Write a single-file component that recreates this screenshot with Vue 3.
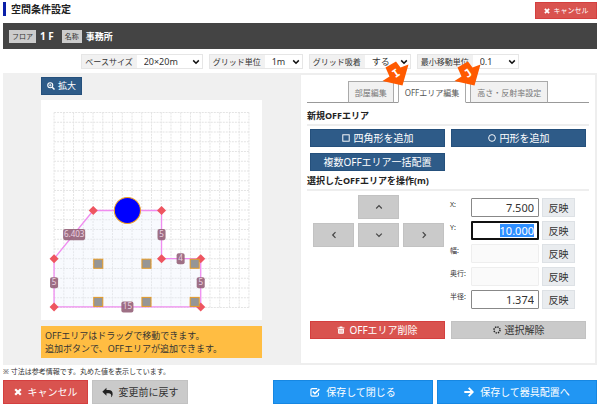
<script setup>
import { onMounted, ref } from 'vue'

const filters = [
  { id: 'base', label: 'ベースサイズ', options: ['20×20m', '30×30m'], size: 'wide' },
  { id: 'grid', label: 'グリッド単位', options: ['1m', '2m'], size: 'narrow' },
  { id: 'snap', label: 'グリッド吸着', options: ['する', 'しない'], size: 'mid' },
  { id: 'step', label: '最小移動単位', options: ['0.1', '0.5'], size: 'mid' },
]

const tabs = [
  { label: '部屋編集' },
  { label: 'OFFエリア編集', active: true, mark: 'I' },
  { label: '高さ・反射率設定', mark: 'J' },
]

const fields = ref([
  { id: 'x', label: 'X:', value: '7.500' },
  { id: 'y', label: 'Y:', value: '10.000' },
  { id: 'w', label: '幅:', value: '', disabled: true },
  { id: 'd', label: '奥行:', value: '', disabled: true },
  { id: 'r', label: '半径:', value: '1.374' },
])

const cells = 20
const side = 194
const lines = Array.from({ length: cells + 1 }, (_, i) => 13 + (i * side) / cells)

const vertices = [[13, 206], [13, 158], [52, 110], [120, 110], [120, 158], [159, 158], [159, 206]]
const outline = vertices.map((v) => v.join(',')).join(' ')
const pillars = [[57, 163], [105, 163], [153, 163], [57, 201], [105, 201], [153, 201]]
const lengths = [
  { x: 33, y: 134, w: 22, text: '6.403' },
  { x: 13, y: 182, w: 8, text: '5' },
  { x: 120, y: 134, w: 8, text: '5' },
  { x: 139, y: 158, w: 8, text: '4' },
  { x: 159, y: 182, w: 8, text: '5' },
  { x: 86, y: 206, w: 12, text: '15' },
]

onMounted(() => {
  const input = document.getElementById('field-y')
  input.focus()
  input.select()
})
</script>

<template>
  <div class="page">
    <header class="head">
      <h1>空間条件設定</h1>
      <button class="btn danger small" type="button">
        <svg class="ico6" viewBox="0 0 10 10"><path d="M1.5 1.5 8.5 8.5M8.5 1.5 1.5 8.5" stroke="currentColor" stroke-width="3" /></svg>
        キャンセル
      </button>
    </header>

    <div class="info">
      <span class="tag">フロア</span><strong class="floor">1 F</strong>
      <span class="tag">名称</span><strong>事務所</strong>
    </div>

    <div class="filters">
      <div v-for="f in filters" :key="f.id" class="filter">
        <label :for="f.id">{{ f.label }}</label>
        <div class="pick" :class="f.size">
          <select :id="f.id">
            <option v-for="o in f.options" :key="o">{{ o }}</option>
          </select>
          <svg viewBox="0 0 8 6"><path d="M1.2 1.4 4 4.2 6.8 1.4" fill="none" stroke="#111" stroke-width="1.5" /></svg>
        </div>
      </div>
    </div>

    <main class="panels">
      <section class="view">
        <button class="btn navy zoom" type="button">
          <svg class="ico8" viewBox="0 0 16 16" fill="none" stroke="currentColor">
            <circle cx="6.5" cy="6.5" r="5" stroke-width="2.2" />
            <path d="M10.5 10.5 15 15" stroke-width="3" />
            <path d="M6.5 4v5M4 6.5h5" stroke-width="1.5" />
          </svg>
          拡大
        </button>
        <div class="canvas">
          <svg viewBox="0 0 220 219">
            <g stroke="#e4e4e4" stroke-width="1" stroke-dasharray="2 1">
              <line v-for="p in lines" :key="'v' + p" :x1="p" y1="12.5" :x2="p" y2="206.5" />
              <line v-for="p in lines" :key="'h' + p" x1="13" :y1="p - 0.5" x2="207" :y2="p - 0.5" />
            </g>
            <polygon :points="outline" fill="#e8effc" fill-opacity=".3" stroke="#f08cf0" stroke-width="1.3" />
            <path
              v-for="(v, i) in vertices"
              :key="'d' + i"
              :d="`M${v[0]} ${v[1] - 4.5}l4.5 4.5-4.5 4.5-4.5-4.5z`"
              fill="#ee5560"
            />
            <g v-for="(l, i) in lengths" :key="'l' + i">
              <rect :x="l.x - l.w / 2" :y="l.y - 5.5" :width="l.w" height="11" rx="2" fill="#936078" fill-opacity=".9" />
              <text :x="l.x" :y="l.y + 2.5" class="len">{{ l.text }}</text>
            </g>
            <circle cx="86" cy="110" r="13" fill="#0000ff" stroke="#f0a020" stroke-width="1" />
            <rect
              v-for="(p, i) in pillars"
              :key="'p' + i"
              :x="p[0] - 4.5"
              :y="p[1] - 4.5"
              width="9"
              height="9"
              fill="#969696"
              stroke="#e59a26"
              stroke-width="1"
            />
          </svg>
        </div>
        <p class="hint">OFFエリアはドラッグで移動できます。<br />追加ボタンで、OFFエリアが追加できます。</p>
      </section>

      <section class="edit">
        <nav class="tabs">
          <div v-for="t in tabs" :key="t.label" class="tab" :class="{ active: t.active }">
            <button type="button">{{ t.label }}</button>
            <svg v-if="t.mark" class="mark" viewBox="0 0 28 26">
              <path d="M3.5 6.5 14 .5 18.5 6.5 26.5 3.5 20.5 24.5.5 20 7.5 15.5z" fill="#ff5a00" />
              <text x="14" y="16" transform="rotate(-35 14 12)">{{ t.mark }}</text>
            </svg>
          </div>
        </nav>

        <h2>新規OFFエリア</h2>
        <div class="pair">
          <button class="btn navy" type="button">
            <svg class="ico8" viewBox="0 0 10 10"><rect x="1" y="1" width="8" height="8" fill="none" stroke="currentColor" stroke-width="1.2" /></svg>
            四角形を追加
          </button>
          <button class="btn navy" type="button">
            <svg class="ico8" viewBox="0 0 10 10"><circle cx="5" cy="5" r="4.2" fill="none" stroke="currentColor" stroke-width="1.2" /></svg>
            円形を追加
          </button>
          <button class="btn navy" type="button">複数OFFエリア一括配置</button>
        </div>

        <h2 class="second">選択したOFFエリアを操作(m)</h2>
        <div class="operate">
          <div class="pad">
            <button class="btn grey up" type="button" aria-label="上">
              <svg class="ico8" viewBox="0 0 8 8"><path d="M1.2 5.5 4 2.7 6.8 5.5" /></svg>
            </button>
            <button class="btn grey left" type="button" aria-label="左">
              <svg class="ico8" viewBox="0 0 8 8"><path d="M5.5 1.2 2.7 4 5.5 6.8" /></svg>
            </button>
            <button class="btn grey" type="button" aria-label="下">
              <svg class="ico8" viewBox="0 0 8 8"><path d="M1.2 2.7 4 5.5 6.8 2.7" /></svg>
            </button>
            <button class="btn grey" type="button" aria-label="右">
              <svg class="ico8" viewBox="0 0 8 8"><path d="M2.7 1.2 5.5 4 2.7 6.8" /></svg>
            </button>
          </div>
          <div class="fields">
            <div v-for="f in fields" :key="f.id" class="field">
              <label :for="'field-' + f.id">{{ f.label }}</label>
              <input :id="'field-' + f.id" v-model="f.value" type="text" :disabled="f.disabled" />
              <button type="button">反映</button>
            </div>
          </div>
        </div>

        <div class="pair last">
          <button class="btn danger" type="button">
            <svg class="ico8" viewBox="0 0 16 16">
              <path d="M5.5 1h5l.7 1.8H15v2H1v-2h3.8zM2.2 5.8h11.6V14q0 1.5-1.5 1.5H3.7Q2.2 15.5 2.2 14z" fill="currentColor" />
              <path d="M5.5 7.5v6M8 7.5v6M10.5 7.5v6" stroke="#d9534f" />
            </svg>
            OFFエリア削除
          </button>
          <button class="btn grey" type="button">
            <svg class="ico8" viewBox="0 0 16 16"><circle cx="8" cy="8" r="6" fill="none" stroke="#222" stroke-width="3" stroke-dasharray="2.7 2.01" /></svg>
            選択解除
          </button>
        </div>
      </section>
    </main>

    <p class="note">※ 寸法は参考情報です。丸めた値を表示しています。</p>

    <footer class="actions">
      <button class="btn danger" type="button">
        <svg class="ico8" viewBox="0 0 10 10"><path d="M1.5 1.5 8.5 8.5M8.5 1.5 1.5 8.5" stroke="currentColor" stroke-width="2.8" /></svg>
        キャンセル
      </button>
      <button class="btn grey revert" type="button">
        <svg class="ico11" viewBox="0 0 16 16"><path d="M6.5 1v3.5h3c4 0 6 2 6 5.5 0 2-.8 3.6-2.2 5 .8-4-.5-5.8-3.8-5.800h-3v3.600L.5 6.900z" fill="#222" /></svg>
        変更前に戻す
      </button>
      <button class="btn blue save" type="button">
        <svg class="ico10" viewBox="0 0 16 16" fill="none" stroke="currentColor">
          <path d="M13.5 9v3.5q0 2-2 2h-8q-2 0-2-2v-8q0-2 2-2h8" stroke-width="1.8" />
          <path d="M4.5 7.2 7.8 10.5 15 3.3" stroke-width="2.6" />
        </svg>
        保存して閉じる
      </button>
      <button class="btn blue save" type="button">
        <svg class="ico10" viewBox="0 0 16 16" fill="none" stroke="currentColor" stroke-width="3"><path d="M.5 8h13M7.5 1.5 14 8l-6.5 6.5" /></svg>
        保存して器具配置へ
      </button>
    </footer>
  </div>
</template>

<style>
body {
  margin: 0;
  background: #fff;
}
</style>

<style scoped>
* {
  box-sizing: border-box;
}
.page {
  padding: 2px 3px;
  font-family: "Noto Sans", "Noto Sans CJK JP", sans-serif;
  font-size: 8px;
  line-height: 13px;
  color: #333;
}
button, input, select {
  font: inherit;
  color: inherit;
  margin: 0;
}
h1, h2, p {
  margin: 0;
}
.head {
  display: flex;
  justify-content: space-between;
  align-items: flex-start;
}
h1 {
  font-size: 10px;
  line-height: 14px;
  border-left: 3px solid #0a1fa8;
  padding-left: 5px;
  color: #222;
}
.btn {
  display: flex;
  align-items: center;
  justify-content: center;
  gap: 4px;
  height: 18px;
  padding: 0;
  border: 1px solid;
  font-size: 10px;
  line-height: 14px;
  white-space: nowrap;
}
.btn svg {
  flex: none;
}
.ico6 { width: 6px; height: 6px; }
.ico8 { width: 8px; height: 8px; }
.ico10 { width: 10px; height: 10px; }
.ico11 { width: 11px; height: 11px; }
.danger {
  background: #d9534f;
  border-color: #d43f3f;
  color: #fff;
}
.navy {
  background: #2e5b88;
  border-color: #25507c;
  color: #fff;
}
.grey {
  background: #cacaca;
  border-color: #c2c2c2;
  color: #333;
}
.blue {
  background: #2196f3;
  border-color: #1687e2;
  color: #fff;
}
.small {
  width: 62px;
  height: 17px;
  font-size: 7px;
}
.info {
  display: flex;
  align-items: center;
  height: 26px;
  margin-top: 4px;
  padding-left: 6px;
  background: #444;
  color: #fff;
  font-size: 9px;
}
.tag {
  padding: 0 3px;
  margin-right: 4px;
  background: #ccc;
  color: #333;
  font-size: 7px;
}
.floor {
  font-size: 10px;
  margin-right: 8px;
}
.filters {
  display: flex;
  justify-content: center;
  gap: 6px;
  margin: 5px 0 4px;
}
.filter {
  display: flex;
  height: 15px;
  border: 1px solid #e6e6e6;
}
.filter label {
  padding: 0 4px 0 3px;
  background: #f1f1f1;
}
.pick {
  position: relative;
  display: flex;
}
.pick select {
  width: 100%;
  appearance: none;
  border: 0;
  border-radius: 0;
  padding: 0 0 0 7px;
  background: #fff;
  font-size: 9px;
}
.pick svg {
  position: absolute;
  right: 2px;
  top: 4px;
  width: 8px;
  height: 6px;
  pointer-events: none;
}
.wide { width: 65px; }
.mid { width: 45px; }
.narrow { width: 37px; }
.panels {
  display: grid;
  grid-template-columns: 1fr 1fr;
}
.view {
  padding: 4px 38px 6px;
  background: #f0f0f0;
}
.zoom {
  width: 41px;
  font-size: 9px;
  gap: 3px;
}
.canvas {
  margin: 5px 0 6px;
  background: #fff;
}
.canvas svg {
  display: block;
  width: 100%;
}
.len {
  font-size: 8px;
  fill: #ecd3e0;
  text-anchor: middle;
}
.hint {
  padding: 3px 4px;
  background: #ffbd42;
  font-size: 9px;
}
.edit {
  padding: 6px 6px 0;
  border: 2px solid #eee;
  border-left-width: 1px;
}
.tabs {
  display: flex;
  justify-content: center;
  gap: 4px;
  border-bottom: 1px solid #999;
}
.tab {
  position: relative;
  margin-bottom: -1px;
}
.tab button {
  display: block;
  height: 22px;
  padding: 0 6px;
  border: 1px solid #aaa;
  border-bottom-color: #999;
  background: #f1f1f1;
  color: #777;
}
.tab.active button {
  background: #fff;
  border-bottom-color: #fff;
  color: #555;
}
.mark {
  position: absolute;
  left: -16px;
  top: -20px;
  width: 28px;
  height: 26px;
  pointer-events: none;
}
.mark text {
  font: bold 11px "DejaVu Sans Mono", monospace;
  fill: #fff;
  text-anchor: middle;
}
h2 {
  margin-top: 6px;
  padding-bottom: 2px;
  border-bottom: 2px solid #eee;
  font-size: 9px;
  line-height: 13px;
  color: #222;
}
.second {
  margin-top: 3px;
}
.pair {
  display: grid;
  grid-template-columns: 1fr 1fr;
  gap: 6px;
  padding: 3px 3px 0;
}
.operate {
  display: flex;
  justify-content: space-between;
  padding: 4px 14px 0 6px;
}
.pad {
  display: grid;
  grid-template-columns: repeat(3, 41px);
  grid-auto-rows: 24px;
  gap: 4px;
  align-content: start;
}
.pad .btn {
  height: 24px;
}
.pad path {
  fill: none;
  stroke: #444;
  stroke-width: 1.2;
}
.up {
  grid-column: 2;
}
.left {
  grid-column: 1;
}
.fields {
  display: grid;
  gap: 4px;
  padding-top: 3px;
}
.field {
  display: grid;
  grid-template-columns: 19px 68px 34px;
  column-gap: 2px;
  height: 19px;
}
.field label {
  font-size: 7px;
  white-space: nowrap;
}
.field input {
  min-width: 0;
  padding: 0 4px;
  border: 1px solid #888;
  border-radius: 1px;
  background: #fff;
  text-align: right;
  font-size: 11px;
  outline: none;
}
.field input:disabled {
  background: #fafafa;
  border-color: #eee;
}
.field input:focus {
  border: 2px solid #111;
  padding: 0 3px;
}
.field input::selection {
  background: #2f8fff;
  color: #fff;
}
.field button {
  padding: 0;
  margin-left: 1px;
  border: 1px solid #dde1e5;
  background: #e9ecef;
  font-size: 10px;
  line-height: 14px;
}
.last {
  padding: 12px 3px 24px;
}
.note {
  font-size: 7px;
}
.actions {
  display: flex;
  gap: 4px;
  margin-top: 2px;
}
.actions .btn {
  flex: 0 1 85px;
  height: 24px;
  gap: 6px;
}
.actions .revert {
  flex-basis: 96px;
  margin-right: auto;
}
.actions .save {
  flex-basis: 160px;
}
</style>
